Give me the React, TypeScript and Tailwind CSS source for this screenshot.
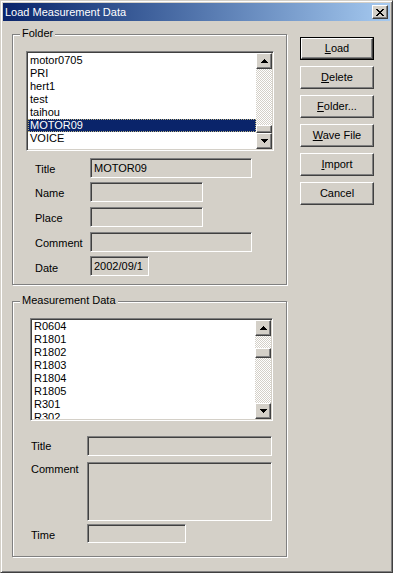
import React from "react";

const raised =
  "bg-[#d4d0c8] border border-t-white border-l-white border-r-[#404040] border-b-[#404040] shadow-[inset_-1px_-1px_0_#808080,inset_1px_1px_0_#d4d0c8]";
const sunken =
  "bg-[#d4d0c8] border border-t-[#808080] border-l-[#808080] border-r-white border-b-white shadow-[inset_1px_1px_0_#404040,inset_-1px_-1px_0_#d4d0c8]";
const sunkenWhite =
  "bg-white border border-t-[#808080] border-l-[#808080] border-r-white border-b-white shadow-[inset_1px_1px_0_#404040,inset_-1px_-1px_0_#d4d0c8]";

function Arrow({ down }: { down?: boolean }) {
  return (
    <div className={`${raised} w-[16px] h-[16px] flex items-center justify-center shrink-0`}>
      <svg
        width="7"
        height="4"
        viewBox="0 0 7 4"
        shapeRendering="crispEdges"
        className={down ? "rotate-180" : ""}
      >
        <path d="M3 0h1v1h1v1h1v1h1v1H0V3h1V2h1V1h1z" fill="#000" />
      </svg>
    </div>
  );
}

function ScrollBar({ thumbTop, thumbH }: { thumbTop: number; thumbH: number }) {
  return (
    <div className="w-[16px] flex flex-col shrink-0">
      <Arrow />
      <div className="flex-1 flex flex-col bg-[image:repeating-conic-gradient(#d4d0c8_0_25%,#ffffff_0_50%)] bg-[length:2px_2px]">
        <div style={{ height: thumbTop }} />
        <div className={raised} style={{ height: thumbH }} />
      </div>
      <Arrow down />
    </div>
  );
}

function ListBox({
  items,
  selected,
  className,
  padTop,
  thumbTop,
  thumbH,
}: {
  items: string[];
  selected?: string;
  className: string;
  padTop: string;
  thumbTop: number;
  thumbH: number;
}) {
  return (
    <div className={`${sunkenWhite} ${className} p-[1px] flex`}>
      <div className={`flex-1 overflow-hidden flex flex-col ${padTop}`}>
        {items.map((it) =>
          it === selected ? (
            <div
              key={it}
              className="h-[13px] leading-[13px] pl-[2px] bg-[#0a246a] text-white outline-1 outline-dotted outline-[#b8b080] -outline-offset-1 shrink-0"
            >
              {it}
            </div>
          ) : (
            <div key={it} className="h-[13px] leading-[13px] pl-[2px] text-black shrink-0">
              {it}
            </div>
          )
        )}
      </div>
      <ScrollBar thumbTop={thumbTop} thumbH={thumbH} />
    </div>
  );
}

function Field({ className, text }: { className: string; text?: string }) {
  return (
    <div className={`${sunken} ${className} flex items-center pl-[3px] leading-[13px]`}>
      {text}
    </div>
  );
}

function Btn({ children, def }: { children: React.ReactNode; def?: boolean }) {
  if (def) {
    return (
      <div className="w-[74px] h-[23px] border border-black">
        <div className={`${raised} w-full h-full flex items-center justify-center`}>{children}</div>
      </div>
    );
  }
  return (
    <div className={`${raised} w-[74px] h-[23px] flex items-center justify-center`}>
      {children}
    </div>
  );
}

function Group({
  label,
  className,
  children,
}: {
  label: string;
  className: string;
  children: React.ReactNode;
}) {
  return (
    <div
      className={`relative border border-[#808080] shadow-[inset_1px_1px_0_#ffffff,1px_1px_0_#ffffff] flex flex-col ${className}`}
    >
      <span className="absolute left-[7px] top-[-8px] px-[2px] bg-[#d4d0c8] leading-[13px]">
        {label}
      </span>
      {children}
    </div>
  );
}

export default function App() {
  return (
    <div className="w-[393px] h-[573px] bg-[#d4d0c8] border border-t-[#d4d0c8] border-l-[#d4d0c8] border-r-[#404040] border-b-[#404040] shadow-[inset_1px_1px_0_#ffffff,inset_-1px_-1px_0_#808080] p-[2px] flex flex-col text-[11px] leading-[13px] text-black font-['Liberation_Sans',Arial,sans-serif] overflow-hidden">
      {/* Title bar */}
      <div className="h-[18px] shrink-0 bg-linear-to-r from-[#0a246a] to-[#a6caf0] flex items-center justify-between pl-[2px] pr-[2px]">
        <span className="text-white text-[11px] leading-[13px]">Load Measurement Data</span>
        <div className={`${raised} w-[16px] h-[14px] flex items-center justify-center`}>
          <svg width="8" height="7" viewBox="0 0 8 7" shapeRendering="crispEdges">
            <path
              d="M0 0h2v1h1v1h2V1h1V0h2v1H7v1H6v1H5v1h1v1h1v1h1v1H6V6H5V5H3v1H2v1H0V6h1V5h1V4h1V3H2V2H1V1H0z"
              fill="#000"
            />
          </svg>
        </div>
      </div>

      {/* Body */}
      <div className="flex flex-1">
        {/* Left column */}
        <div className="flex flex-col ml-[9px]">
          <Group label="Folder" className="mt-[13px] w-[275px] h-[251px]">
            <ListBox
              className="ml-[13px] mt-[16px] w-[248px] h-[100px]"
              padTop="pt-[1px]"
              items={["motor0705", "PRI", "hert1", "test", "taihou", "MOTOR09", "VOICE"]}
              selected="MOTOR09"
              thumbTop={56}
              thumbH={8}
            />
            <div className="flex ml-[22px] mt-[7px]">
              <span className="w-[55px] pt-[5px]">Title</span>
              <Field className="w-[162px] h-[20px]" text="MOTOR09" />
            </div>
            <div className="flex ml-[22px] mt-[4px]">
              <span className="w-[55px] pt-[5px]">Name</span>
              <Field className="w-[113px] h-[20px]" />
            </div>
            <div className="flex ml-[22px] mt-[5px]">
              <span className="w-[55px] pt-[5px]">Place</span>
              <Field className="w-[113px] h-[20px]" />
            </div>
            <div className="flex ml-[22px] mt-[5px]">
              <span className="w-[55px] pt-[5px]">Comment</span>
              <Field className="w-[162px] h-[20px]" />
            </div>
            <div className="flex ml-[22px] mt-[4px]">
              <span className="w-[55px] pt-[6px]">Date</span>
              <Field className="w-[59px] h-[20px]" text="2002/09/1" />
            </div>
          </Group>

          <Group label="Measurement Data" className="mt-[16px] w-[275px] h-[256px]">
            <ListBox
              className="ml-[17px] mt-[16px] w-[243px] h-[103px]"
              padTop="pt-0"
              items={["R0604", "R1801", "R1802", "R1803", "R1804", "R1805", "R301", "R302"]}
              thumbTop={12}
              thumbH={10}
            />
            <div className="flex ml-[18px] mt-[15px]">
              <span className="w-[56px] pt-[4px]">Title</span>
              <Field className="w-[185px] h-[20px]" />
            </div>
            <div className="flex ml-[18px] mt-[6px]">
              <span className="w-[56px] pt-[1px]">Comment</span>
              <Field className="w-[185px] h-[59px]" />
            </div>
            <div className="flex ml-[18px] mt-[3px]">
              <span className="w-[56px] pt-[5px]">Time</span>
              <Field className="w-[99px] h-[19px]" />
            </div>
          </Group>
        </div>

        {/* Right column: buttons */}
        <div className="flex flex-col gap-[6px] ml-[13px] mt-[16px]">
          <Btn def>
            <span>
              <span className="underline">L</span>oad
            </span>
          </Btn>
          <Btn>
            <span>
              <span className="underline">D</span>elete
            </span>
          </Btn>
          <Btn>
            <span>
              <span className="underline">F</span>older...
            </span>
          </Btn>
          <Btn>
            <span>
              <span className="underline">W</span>ave File
            </span>
          </Btn>
          <Btn>
            <span>
              <span className="underline">I</span>mport
            </span>
          </Btn>
          <Btn>
            <span>Cancel</span>
          </Btn>
        </div>
      </div>
    </div>
  );
}
